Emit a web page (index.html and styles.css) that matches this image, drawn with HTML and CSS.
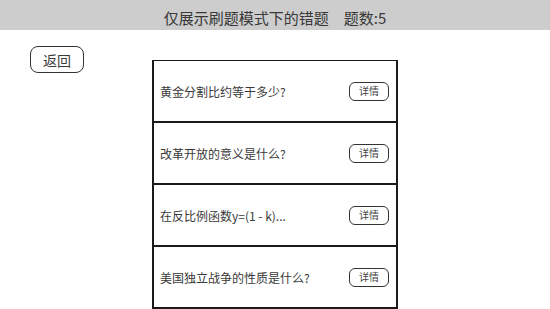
FILE: index.html
```html
<!DOCTYPE html>
<html lang="zh-CN">
<head>
<meta charset="utf-8">
<title>错题</title>
<link rel="stylesheet" href="styles.css">
</head>
<body>
<header class="topbar">
  <span class="title">仅展示刷题模式下的错题</span><span class="count">题数:5</span>
</header>
<main class="layout">
  <div class="side">
    <button class="back">返回</button>
  </div>
  <ul class="list">
    <li class="card"><span class="q">黄金分割比约等于多少?</span><button class="detail">详情</button></li>
    <li class="card"><span class="q">改革开放的意义是什么?</span><button class="detail">详情</button></li>
    <li class="card"><span class="q">在反比例函数y=(1 - k)...</span><button class="detail">详情</button></li>
    <li class="card"><span class="q">美国独立战争的性质是什么?</span><button class="detail">详情</button></li>
  </ul>
  <div class="side"></div>
</main>
</body>
</html>
```

FILE: styles.css
```css
* { box-sizing: border-box; }
html, body {
  margin: 0;
  padding: 0;
  background: #ffffff;
  font-family: "Noto Sans CJK SC", "Noto Sans", sans-serif;
  color: #333333;
  height: 309px;
  overflow: hidden;
}
.topbar {
  height: 30px;
  background: #cdcdcd;
  padding-top: 8px;
  text-align: center;
  font-size: 15px;
  line-height: 20px;
  color: #383838;
}
.count { margin-left: 15px; }
.layout {
  display: grid;
  grid-template-columns: 152px 246px 152px;
}
.side {
  padding: 16px 0 0 30px;
}
.back {
  width: 54px;
  height: 27px;
  border: 1px solid #333333;
  border-radius: 8px;
  background: #ffffff;
  font-family: "Noto Sans CJK SC", sans-serif;
  font-size: 14px;
  line-height: 1;
  color: #3a3a3a;
  padding: 0;
}
.list {
  list-style: none;
  margin: 30px 0 0 0;
  padding: 0;
}
.card {
  height: 62px;
  border-top: 1px solid #1a1a1a;
  border-bottom: 1px solid #1a1a1a;
  border-left: 2px solid #1a1a1a;
  border-right: 2px solid #1a1a1a;
  display: flex;
  align-items: center;
  justify-content: space-between;
  padding: 0 7px 0 6px;
}
.card:last-child {
  height: 63px;
  border-bottom-width: 2px;
}
.q {
  font-size: 12px;
  color: #3a3a3a;
}
.detail {
  width: 40px;
  height: 19px;
  border: 1px solid #333333;
  border-radius: 6px;
  background: #ffffff;
  font-family: "Noto Sans CJK SC", sans-serif;
  font-size: 10px;
  line-height: 1;
  color: #444444;
  padding: 0;
}
```
